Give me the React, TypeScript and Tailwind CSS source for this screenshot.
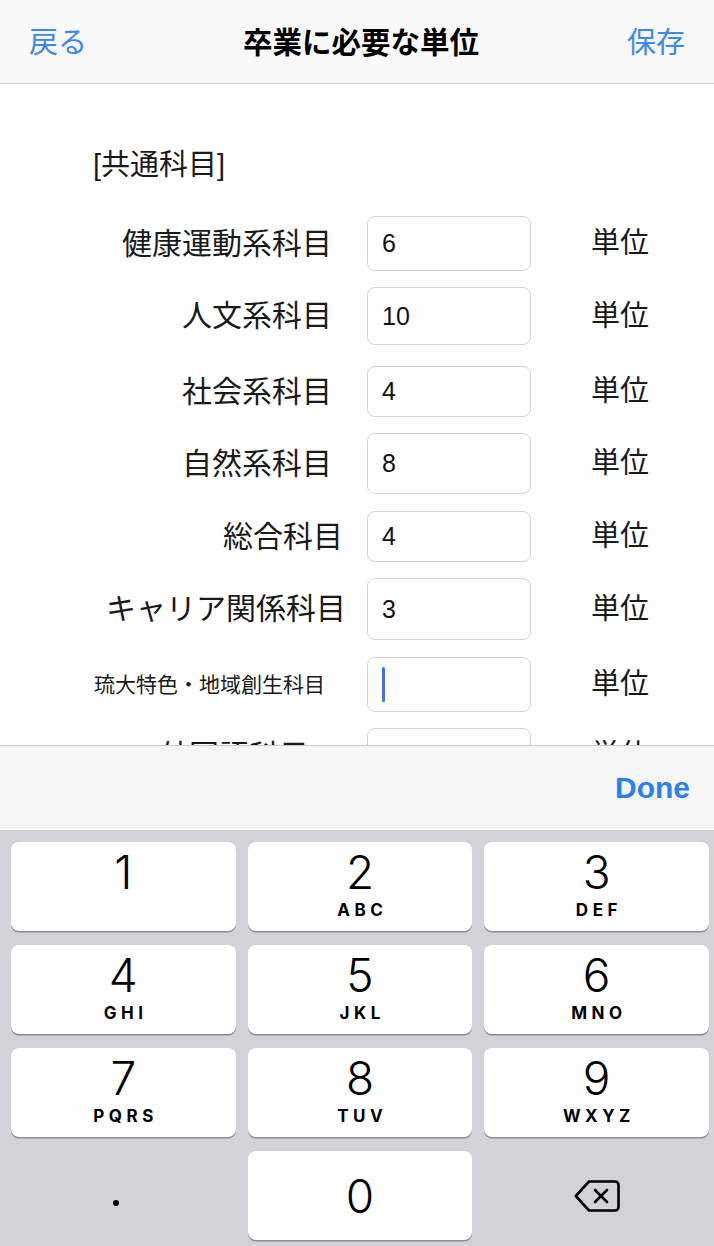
import React from "react";

const jp = "font-['Liberation_Sans','Noto_Sans_CJK_JP',sans-serif]";

const rows = [
  { label: "健康運動系科目", value: "6", h: "h-[55px]", mt: "mt-[31px]", pr: "pr-[35px]", small: false },
  { label: "人文系科目", value: "10", h: "h-[58px]", mt: "mt-[16px]", pr: "pr-[35px]", small: false },
  { label: "社会系科目", value: "4", h: "h-[51px]", mt: "mt-[21px]", pr: "pr-[35px]", small: false },
  { label: "自然系科目", value: "8", h: "h-[61px]", mt: "mt-[16px]", pr: "pr-[35px]", small: false },
  { label: "総合科目", value: "4", h: "h-[51px]", mt: "mt-[17px]", pr: "pr-[24px]", small: false },
  { label: "キャリア関係科目", value: "3", h: "h-[62px]", mt: "mt-[16px]", pr: "pr-[21px]", small: false },
  { label: "琉大特色・地域創生科目", value: "", h: "h-[55px]", mt: "mt-[17px]", pr: "pr-[42px]", small: true, focused: true },
  { label: "外国語科目", value: "", h: "h-[55px]", mt: "mt-[16px]", pr: "pr-[58px]", small: false },
];

const keys = [
  { d: "1", l: "" },
  { d: "2", l: "ABC" },
  { d: "3", l: "DEF" },
  { d: "4", l: "GHI" },
  { d: "5", l: "JKL" },
  { d: "6", l: "MNO" },
  { d: "7", l: "PQRS" },
  { d: "8", l: "TUV" },
  { d: "9", l: "WXYZ" },
];

function DeleteIcon() {
  return (
    <svg width="46" height="32" viewBox="0 0 46 32" fill="none" stroke="#000" strokeWidth="2.6" strokeLinejoin="round" strokeLinecap="round">
      <path d="M15 1.5 H41 a3.5 3.5 0 0 1 3.5 3.5 V27 a3.5 3.5 0 0 1 -3.5 3.5 H15 L1.8 16 Z" />
      <path d="M21 10 L33 22 M33 10 L21 22" />
    </svg>
  );
}

export default function App() {
  return (
    <div className={`w-[714px] h-[1246px] flex flex-col bg-white overflow-hidden ${jp}`}>
      {/* Navigation bar */}
      <header className="h-[84px] shrink-0 bg-[#f8f8f8] border-b border-[#cfcfcf] flex items-center justify-between px-[29px]">
        <span className="text-[29px] leading-none text-[#3a88f0] mt-[4px]">戻る</span>
        <span className="text-[29.5px] leading-none font-bold text-black ml-[8px] mt-[2px]">卒業に必要な単位</span>
        <span className="text-[29px] leading-none text-[#3a88f0] mt-[4px]">保存</span>
      </header>

      {/* Form */}
      <main className="flex-1 overflow-hidden">
        <div className="pt-[61px] pl-[93px] h-[101px] flex items-center">
          <span className="text-[29px] leading-none text-[#1a1a1a]">[共通科目]</span>
        </div>
        {rows.map((r) => (
          <div key={r.label} className={`flex items-center ${r.h} ${r.mt}`}>
            <div className={`w-[367px] shrink-0 text-right ${r.pr} leading-none text-[#1a1a1a] ${r.small ? "text-[21px]" : "text-[30px]"}`}>
              {r.label}
            </div>
            <div className="w-[164px] h-full shrink-0 rounded-[8px] border border-[#d5d5d5] bg-white flex items-center pl-[14px]">
              {r.focused ? (
                <div className="w-[3px] h-[35px] rounded-full bg-[#3d6fef]" />
              ) : (
                <span className="text-[25px] leading-none text-[#111]">{r.value}</span>
              )}
            </div>
            <div className="ml-[60px] text-[29px] leading-none text-[#1a1a1a]">単位</div>
          </div>
        ))}
      </main>

      {/* Keyboard accessory bar */}
      <div className="h-[85px] shrink-0 bg-[#f6f6f6] border-t border-[#c9c9c9] flex items-center justify-end pr-[24px]">
        <span className="text-[30px] leading-none font-bold text-[#2a7ff5] font-['Liberation_Sans',sans-serif]">Done</span>
      </div>

      {/* Number pad */}
      <div className="h-[416px] shrink-0 bg-[#d1d3d9] pt-[12px] pl-[11px] pr-[5px] grid grid-cols-3 grid-rows-[89px_89px_89px_89px] gap-x-[12px] gap-y-[14px] content-start">
        {keys.map((k) => (
          <div key={k.d} className="bg-white rounded-[8px] shadow-[0_1.5px_0_#898b90] flex flex-col items-center pt-[8px]">
            <span className="font-['Inter',sans-serif] font-light text-[46px] leading-[44px] text-black">{k.d}</span>
            {k.l && (
              <span className="font-['Inter',sans-serif] font-bold text-[17px] leading-[17px] tracking-[4.5px] pl-[4.5px] text-black mt-[8px]">{k.l}</span>
            )}
          </div>
        ))}
        <div className="flex items-center justify-center">
          <div className="w-[6px] h-[6px] rounded-full bg-black mt-[14px] mr-[14px]" />
        </div>
        <div className="bg-white rounded-[8px] shadow-[0_1.5px_0_#898b90] flex items-center justify-center">
          <span className="font-['Inter',sans-serif] font-light text-[46px] leading-none text-black">0</span>
        </div>
        <div className="flex items-center justify-center">
          <DeleteIcon />
        </div>
      </div>
    </div>
  );
}
